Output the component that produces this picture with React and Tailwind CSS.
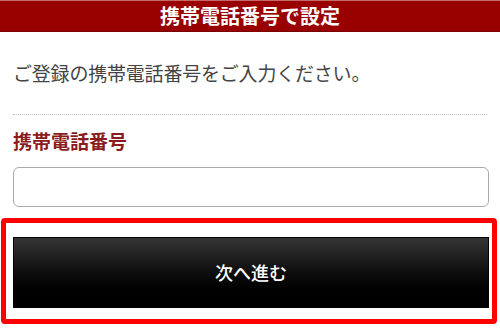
import React from 'react'

const App = () => {
    return (
        <div className='w-[500px] h-[335px] bg-white overflow-hidden' style={{ fontFamily: '"Noto Sans CJK JP", "Noto Sans", sans-serif' }}>

            {/* Header */}
            <div className='h-[32px] bg-[#990000] border-t border-t-[#c46a6a] border-b border-b-[#7a0000] flex items-center justify-center'>
                <h1 className='text-[20px] font-bold text-white leading-none'>携帯電話番号で設定</h1>
            </div>

            <div className='pl-[13px] pr-[11px]'>
                <p className='mt-[28px] text-[19px] leading-[26px] text-[#444444] tracking-[-0.2px]'>ご登録の携帯電話番号をご入力ください。</p>

                <div className='mt-[28px] mr-[2px] border-t border-dotted border-[#bbbbbb]'></div>

                <h2 className='mt-[14px] text-[19px] leading-[24px] font-bold text-[#8a1c1c]'>携帯電話番号</h2>

                <input
                    type='tel'
                    className='mt-[14px] block w-full h-[40px] rounded-[6px] border border-[#aaaaaa] bg-white px-3 text-[18px] outline-none'
                />
            </div>

            {/* Next button */}
            <div className='mt-[11px] ml-[1px] w-[496px] h-[106px] rounded-[4px] border-[5px] border-[#ff0000] pl-[7px] pr-[3px] pt-[14px]'>
                <button className='w-full h-[71px] border border-black bg-gradient-to-b from-[#353535] to-[#000000] text-white text-[18px] font-medium flex items-center justify-center'>
                    次へ進む
                </button>
            </div>
        </div>
    )
}

export default App
